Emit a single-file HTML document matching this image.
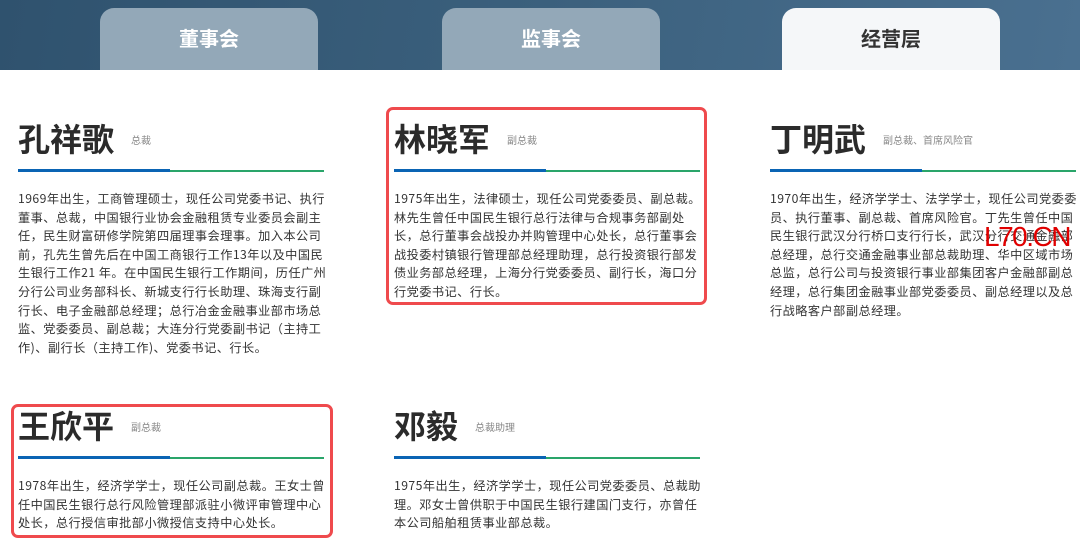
<!DOCTYPE html><html><head><meta charset="utf-8"><style>
*{margin:0;padding:0;box-sizing:border-box}
body{width:1080px;height:536px;overflow:hidden;background:#fff;font-family:"Liberation Sans","Noto Sans CJK SC",sans-serif;position:relative}
.hdr{position:absolute;left:0;top:0;width:1080px;height:70px;background:linear-gradient(100deg,#2f526e 0%,#3b607d 50%,#4a7090 100%)}
.tab{position:absolute;top:8px;width:218px;height:62px;border-radius:14px 14px 0 0;background:#93a8b8;color:#fff;font-weight:bold;font-size:20px;text-align:center;line-height:60px;font-family:"Noto Sans CJK SC",sans-serif}
.tab.a{background:#f5f7f9;color:#333}
.p{position:absolute;width:306px}
.n{position:absolute;top:0;left:0;font-size:32px;font-weight:bold;color:#2b2b2b;font-family:"Noto Sans CJK SC",sans-serif;line-height:40px}
.t{position:absolute;top:14px;font-size:10px;color:#888;font-family:"Noto Sans CJK SC",sans-serif}
.l{position:absolute;top:52px;left:0;width:306px;height:2px;background:#2aa56a}
.l:before{content:"";position:absolute;left:0;top:-1px;width:152px;height:3px;background:#0a64b4}
.b{position:absolute;top:71px;left:0;font-size:12.2px;line-height:18.6px;color:#333;white-space:nowrap;letter-spacing:0.45px;font-family:"Noto Sans CJK SC",sans-serif}
.box{position:absolute;border:3px solid #ef4a4d;border-radius:7px}
</style></head><body>
<div class="hdr"></div>
<div class="tab" style="left:100px">董事会</div>
<div class="tab" style="left:442px">监事会</div>
<div class="tab a" style="left:782px">经营层</div>

<div class="p" style="left:18px;top:118px"><div class="n">孔祥歌</div><div class="t" style="left:113px">总裁</div><div class="l"></div>
<div class="b">1969年出生，工商管理硕士，现任公司党委书记、执行<br>董事、总裁，中国银行业协会金融租赁专业委员会副主<br>任，民生财富研修学院第四届理事会理事。加入本公司<br>前，孔先生曾先后在中国工商银行工作13年以及中国民<br>生银行工作21 年。在中国民生银行工作期间，历任广州<br>分行公司业务部科长、新城支行行长助理、珠海支行副<br>行长、电子金融部总经理；总行冶金金融事业部市场总<br>监、党委委员、副总裁；大连分行党委副书记（主持工<br>作)、副行长（主持工作)、党委书记、行长。</div></div>

<div class="p" style="left:394px;top:118px"><div class="n">林晓军</div><div class="t" style="left:113px">副总裁</div><div class="l"></div>
<div class="b">1975年出生，法律硕士，现任公司党委委员、副总裁。<br>林先生曾任中国民生银行总行法律与合规事务部副处<br>长，总行董事会战投办并购管理中心处长，总行董事会<br>战投委村镇银行管理部总经理助理，总行投资银行部发<br>债业务部总经理，上海分行党委委员、副行长，海口分<br>行党委书记、行长。</div></div>

<div class="p" style="left:770px;top:118px"><div class="n">丁明武</div><div class="t" style="left:113px">副总裁、首席风险官</div><div class="l"></div>
<div class="b">1970年出生，经济学学士、法学学士，现任公司党委委<br>员、执行董事、副总裁、首席风险官。丁先生曾任中国<br>民生银行武汉分行桥口支行行长，武汉分行交通金融部<br>总经理，总行交通金融事业部总裁助理、华中区域市场<br>总监，总行公司与投资银行事业部集团客户金融部副总<br>经理，总行集团金融事业部党委委员、副总经理以及总<br>行战略客户部副总经理。</div></div>

<div class="p" style="left:18px;top:405px"><div class="n">王欣平</div><div class="t" style="left:113px">副总裁</div><div class="l"></div>
<div class="b">1978年出生，经济学学士，现任公司副总裁。王女士曾<br>任中国民生银行总行风险管理部派驻小微评审管理中心<br>处长，总行授信审批部小微授信支持中心处长。</div></div>

<div class="p" style="left:394px;top:405px"><div class="n">邓毅</div><div class="t" style="left:81px">总裁助理</div><div class="l"></div>
<div class="b">1975年出生，经济学学士，现任公司党委委员、总裁助<br>理。邓女士曾供职于中国民生银行建国门支行，亦曾任<br>本公司船舶租赁事业部总裁。</div></div>

<div class="box" style="left:386px;top:107px;width:321px;height:198px"></div>
<div class="box" style="left:11px;top:404px;width:322px;height:134px"></div>
<div style="position:absolute;left:984px;top:222px;font-size:28px;color:#e00000;font-family:'Liberation Sans',sans-serif;letter-spacing:-1.5px;line-height:30px">L70.CN</div>
</body></html>
